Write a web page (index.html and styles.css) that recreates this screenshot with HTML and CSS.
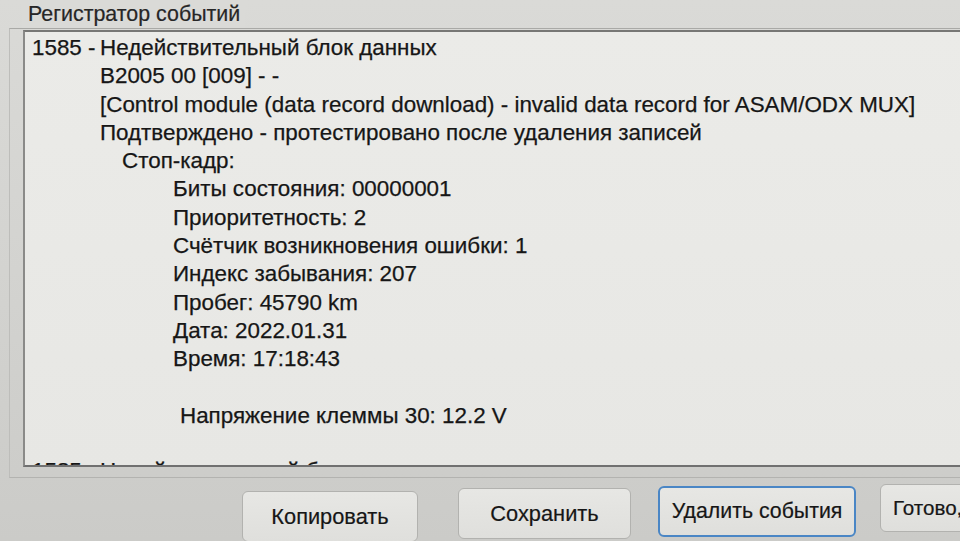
FILE: index.html
```html
<!DOCTYPE html>
<html lang="ru">
<head>
<meta charset="utf-8">
<title>Регистратор событий</title>
<link rel="stylesheet" href="styles.css">
</head>
<body>
<div class="window">
  <div class="group">
    <div class="legend">Регистратор событий</div>
    <div class="log">
      <div class="line"><span class="num">1585 - </span>Недействительный блок данных</div>
      <div class="line l1">B2005 00 [009] - -</div>
      <div class="line l1">[Control module (data record download) - invalid data record for ASAM/ODX MUX]</div>
      <div class="line l1">Подтверждено - протестировано после удаления записей</div>
      <div class="line l2">Стоп-кадр:</div>
      <div class="line l3">Биты состояния: 00000001</div>
      <div class="line l3">Приоритетность: 2</div>
      <div class="line l3">Счётчик возникновения ошибки: 1</div>
      <div class="line l3">Индекс забывания: 207</div>
      <div class="line l3">Пробег: 45790 km</div>
      <div class="line l3">Дата: 2022.01.31</div>
      <div class="line l3">Время: 17:18:43</div>
      <div class="line blank">&nbsp;</div>
      <div class="line l3 volt">Напряжение клеммы 30: 12.2 V</div>
      <div class="line blank">&nbsp;</div>
      <div class="line next"><span class="num">1585 - </span>Недействительный блок данных</div>
    </div>
  </div>
  <div class="buttons">
    <button class="btn b1">Копировать</button>
    <button class="btn b2">Сохранить</button>
    <button class="btn b3 default">Удалить события</button>
    <button class="btn b4">Готово,</button>
  </div>
</div>
</body>
</html>
```
FILE: styles.css
```css
html, body {
  margin: 0;
  padding: 0;
  width: 960px;
  height: 541px;
  overflow: hidden;
}
body {
  background: linear-gradient(180deg, #dadad7 0%, #d3d3d0 50%, #cbcbc8 100%);
  font-family: "Liberation Sans", Arial, sans-serif;
  color: #161616;
}
.window {
  padding: 0 0 0 9px;
}
.group {
  position: relative;
  margin-top: 28px;
  border-top: 1px solid #a9a9a6;
  border-left: 1px solid #bdbdba;
  border-bottom: 1px solid #b3b3b0;
  padding: 1px 0 13px 13px;
  height: 434px;
}
.legend {
  position: absolute;
  top: -29px;
  left: 12px;
  padding: 0 5px 0 6px;
  font-size: 21.4px;
  line-height: 28px;
  color: #262626;
  background: #dadad7;
  -webkit-text-stroke: 0.2px #262626;
}
.log {
  height: 431px;
  background: linear-gradient(180deg, #ebebe8, #e7e7e4);
  border-top: 2px solid #777775;
  border-left: 2px solid #8a8a88;
  border-bottom: 2px solid #707070;
  padding: 2px 0 0 7px;
  overflow: hidden;
  font-size: 22.4px;
  line-height: 28.3px;
  white-space: nowrap;
  -webkit-text-stroke: 0.25px #161616;
}
.line { height: 28.3px; }
.num { display: inline-block; width: 68px; }
.l1 { padding-left: 68px; }
.l2 { padding-left: 90px; }
.l3 { padding-left: 141px; }
.volt { padding-left: 148px; }
.next { margin-top: -1px; }
.buttons {
  display: flex;
  align-items: flex-start;
  padding: 9px 0 0 233px;
}
.btn {
  font-family: "Liberation Sans", Arial, sans-serif;
  font-size: 21.8px;
  color: #161616;
  -webkit-text-stroke: 0.2px #161616;
  background: linear-gradient(180deg, #e7e7e4, #dfdfdc);
  border: 1.5px solid #b2b2af;
  border-radius: 6px;
  height: 51px;
  padding: 0;
  flex: none;
}
.b1 { width: 176px; margin-top: 4px; }
.b2 { width: 173px; margin-left: 40px; margin-top: 1px; }
.b3 { width: 198px; margin-left: 27px; margin-top: -1px; font-size: 21.3px; }
.b4 { width: 110px; margin-left: 24px; margin-top: -3px; text-align: left; padding-left: 12px; height: 48px; font-size: 20.6px; }
.default {
  border: 2px solid #4a86c5;
}
```
